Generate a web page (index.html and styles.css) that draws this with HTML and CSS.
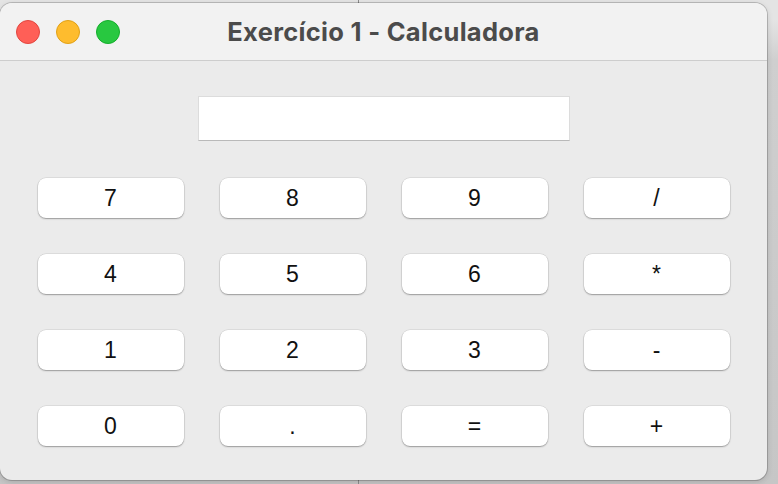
FILE: index.html
```html
<!DOCTYPE html>
<html lang="pt">
<head>
<meta charset="utf-8">
<title>Exercício 1 - Calculadora</title>
<link rel="stylesheet" href="styles.css">
</head>
<body>
<div class="desktop">
  <div class="window">
    <div class="titlebar">
      <div class="lights">
        <span class="light red"></span>
        <span class="light yellow"></span>
        <span class="light green"></span>
      </div>
      <div class="title">Exercício 1 - Calculadora</div>
    </div>
    <div class="content">
      <div class="display"></div>
      <div class="keys">
        <button class="key">7</button>
        <button class="key">8</button>
        <button class="key">9</button>
        <button class="key">/</button>
        <button class="key">4</button>
        <button class="key">5</button>
        <button class="key">6</button>
        <button class="key">*</button>
        <button class="key">1</button>
        <button class="key">2</button>
        <button class="key">3</button>
        <button class="key">-</button>
        <button class="key">0</button>
        <button class="key">.</button>
        <button class="key">=</button>
        <button class="key">+</button>
      </div>
    </div>
  </div>
</div>
</body>
</html>
```
FILE: styles.css
```css
html, body {
  margin: 0;
  padding: 0;
  width: 778px;
  height: 484px;
  overflow: hidden;
}
body {
  background:
    linear-gradient(to right, transparent 358px, #8c8c8c 358px, #8c8c8c 359px, transparent 359px),
    linear-gradient(to bottom, #e4e4e4 0, #e4e4e4 20px, #cfcfcf 60px, #c6c6c6 100%);
}
.desktop {
  padding-top: 3px;
}
.window {
  width: 767px;
  height: 477px;
  border-radius: 12px;
  background: #ebebeb;
  box-shadow: 0 0 0 1px rgba(0,0,0,0.18), 0 2px 6px rgba(0,0,0,0.15);
  overflow: hidden;
  display: flex;
  flex-direction: column;
}
.titlebar {
  height: 58px;
  box-sizing: border-box;
  background: #f2f2f2;
  border-bottom: 1px solid #cdcdcd;
  display: flex;
  align-items: center;
  position: relative;
}
.lights {
  display: flex;
  gap: 16px;
  padding-left: 16px;
  padding-top: 1px;
}
.light {
  width: 24px;
  height: 24px;
  border-radius: 50%;
  box-sizing: border-box;
}
.red { background: #ff5f57; border: 1px solid #e2463f; }
.yellow { background: #febc2e; border: 1px solid #e1a116; }
.green { background: #28c840; border: 1px solid #14ae2b; }
.title {
  position: absolute;
  left: 0;
  right: 0;
  top: 0;
  bottom: 0;
  display: flex;
  align-items: center;
  justify-content: center;
  font-family: Inter, "Noto Sans", sans-serif;
  font-weight: 700;
  font-size: 25.5px;
  color: #4b4b4b;
  letter-spacing: 0.3px;
  padding-bottom: 0;
  pointer-events: none;
}
.content {
  flex: 1;
  display: flex;
  flex-direction: column;
  align-items: center;
}
.display {
  margin-top: 35px;
  margin-left: 1px;
  width: 372px;
  height: 45px;
  box-sizing: border-box;
  background: #fff;
  border: 1px solid #dcdcdc;
  border-bottom: 1px solid #b9b9b9;
}
.keys {
  margin-top: 37px;
  display: grid;
  grid-template-columns: repeat(4, 146px);
  grid-auto-rows: 40px;
  column-gap: 36px;
  row-gap: 36px;
}
.key {
  margin: 0;
  padding: 0;
  border: none;
  border-radius: 8px;
  background: #fff;
  box-shadow: 0 0 0 0.5px rgba(0,0,0,0.12), 0 1px 1.5px rgba(0,0,0,0.3);
  font-family: "Liberation Sans", Arial, sans-serif;
  font-size: 23px;
  color: #111;
  line-height: 40px;
  text-align: center;
}
```
